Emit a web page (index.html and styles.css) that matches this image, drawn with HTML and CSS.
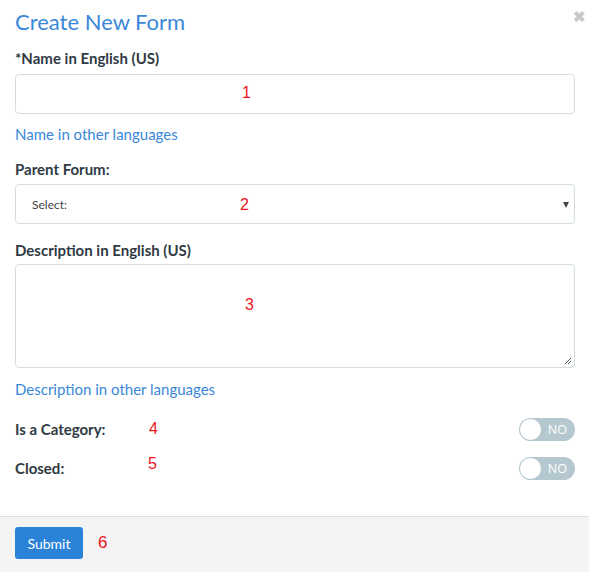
FILE: index.html
```html
<!DOCTYPE html>
<html>
<head>
<meta charset="utf-8">
<link rel="stylesheet" href="styles.css">
</head>
<body>
<div class="modal">
  <div class="body">
    <div class="header">
      <h1 class="title">Create New Form</h1>
      <span class="close">&#10006;</span>
    </div>
    <label class="label">*Name in English (US)</label>
    <div class="input"><span class="num n1">1</span></div>
    <a class="link">Name in other languages</a>
    <label class="label">Parent Forum:</label>
    <div class="input select"><span class="sel">Select:</span><span class="num n2">2</span><span class="caret"></span></div>
    <label class="label">Description in English (US)</label>
    <div class="input textarea"><span class="num n3">3</span>
      <svg class="grip" width="8" height="8" viewBox="0 0 8 8"><path d="M7 1L1 7M7 4L4 7" stroke="#555" stroke-width="1"/></svg>
    </div>
    <a class="link">Description in other languages</a>
    <div class="row r1">
      <span class="rlabel">Is a Category:</span><span class="num n4">4</span>
      <span class="toggle"><span class="knob"></span><span class="no">NO</span></span>
    </div>
    <div class="row r2">
      <span class="rlabel">Closed:</span><span class="num n5">5</span>
      <span class="toggle"><span class="knob"></span><span class="no">NO</span></span>
    </div>
  </div>
  <div class="footer">
    <button class="submit">Submit</button><span class="num n6">6</span>
  </div>
</div>
</body>
</html>
```
FILE: styles.css
```css
html, body { margin: 0; padding: 0; background: #fff; }
body { font-family: "Lato", "Open Sans", sans-serif; color: #2f3a44; width: 589px; height: 572px; overflow: hidden; }
.modal { display: flex; flex-direction: column; height: 572px; }
.body { padding: 0 14px 0 15px; flex: 1; display: flex; flex-direction: column; }
.header { display: flex; justify-content: space-between; align-items: flex-start; height: 42px; }
.title { margin: 8px 0 0; font-size: 22px; font-weight: 400; color: #3a87d9; }
.close { color: #c9c9c9; font-size: 15px; margin: 7px -11px 0 0; font-weight: bold; }
.label { font-size: 15px; font-weight: 700; color: #2f3a44; height: 32px; line-height: 18px; padding-top: 7px; box-sizing: border-box; display: block; }
.input { position: relative; height: 40px; border: 1px solid #d3dee4; border-radius: 4px; box-sizing: border-box; display: flex; align-items: center; }
.num { font-family: "Liberation Sans", Arial, sans-serif; color: #e8141c; font-size: 16px; }
.n1 { margin-left: 226px; margin-top: -2px; }
.link { color: #3a87d9; font-size: 15px; height: 40px; line-height: 40px; display: block; }
.link + .label { height: 30px; padding-top: 6px; }
.sel { font-size: 12px; color: #444; margin-left: 16px; }
.n2 { margin-left: 173px; margin-top: 2px; }
.caret { position: absolute; right: 5px; top: 17px; width: 0; height: 0; border-left: 3.5px solid transparent; border-right: 3.5px solid transparent; border-top: 6px solid #444; }
.select + .label { margin-top: 10px; height: 30px; padding-top: 7px; }
.textarea { height: 104px; align-items: flex-start; }
.n3 { margin-left: 229px; margin-top: 31px; }
.grip { position: absolute; right: 2px; bottom: 2px; }
.textarea + .link { height: 42px; line-height: 42px; }
.row { display: flex; align-items: center; height: 24px; }
.r1 { margin-top: 7px; }
.r2 { margin-top: 15px; }
.rlabel { font-size: 15px; font-weight: 700; width: 134px; }
.n5 { margin-top: -8px; }
.r2 .rlabel { width: 133px; }
.toggle { margin-left: auto; width: 56px; height: 23px; background: #b5c8cf; border-radius: 12px; position: relative; display: flex; align-items: center; justify-content: flex-end; }
.knob { position: absolute; left: 1px; top: 1px; width: 21px; height: 21px; border-radius: 50%; background: #fff; }
.no { color: #fff; font-size: 12.5px; font-family: "Open Sans", sans-serif; margin-right: 8px; }
.footer { height: 56px; border-top: 1px solid #dedede; background: #f4f4f4; display: flex; align-items: flex-start; padding: 10px 0 0 15px; box-sizing: border-box; }
.submit { width: 68px; height: 32px; background: #2a83d8; color: #fff; border: 0; border-radius: 3px; font-family: "Lato", sans-serif; font-size: 14px; }
.n6 { margin-left: 15px; font-size: 17px; line-height: 32px; }
```
